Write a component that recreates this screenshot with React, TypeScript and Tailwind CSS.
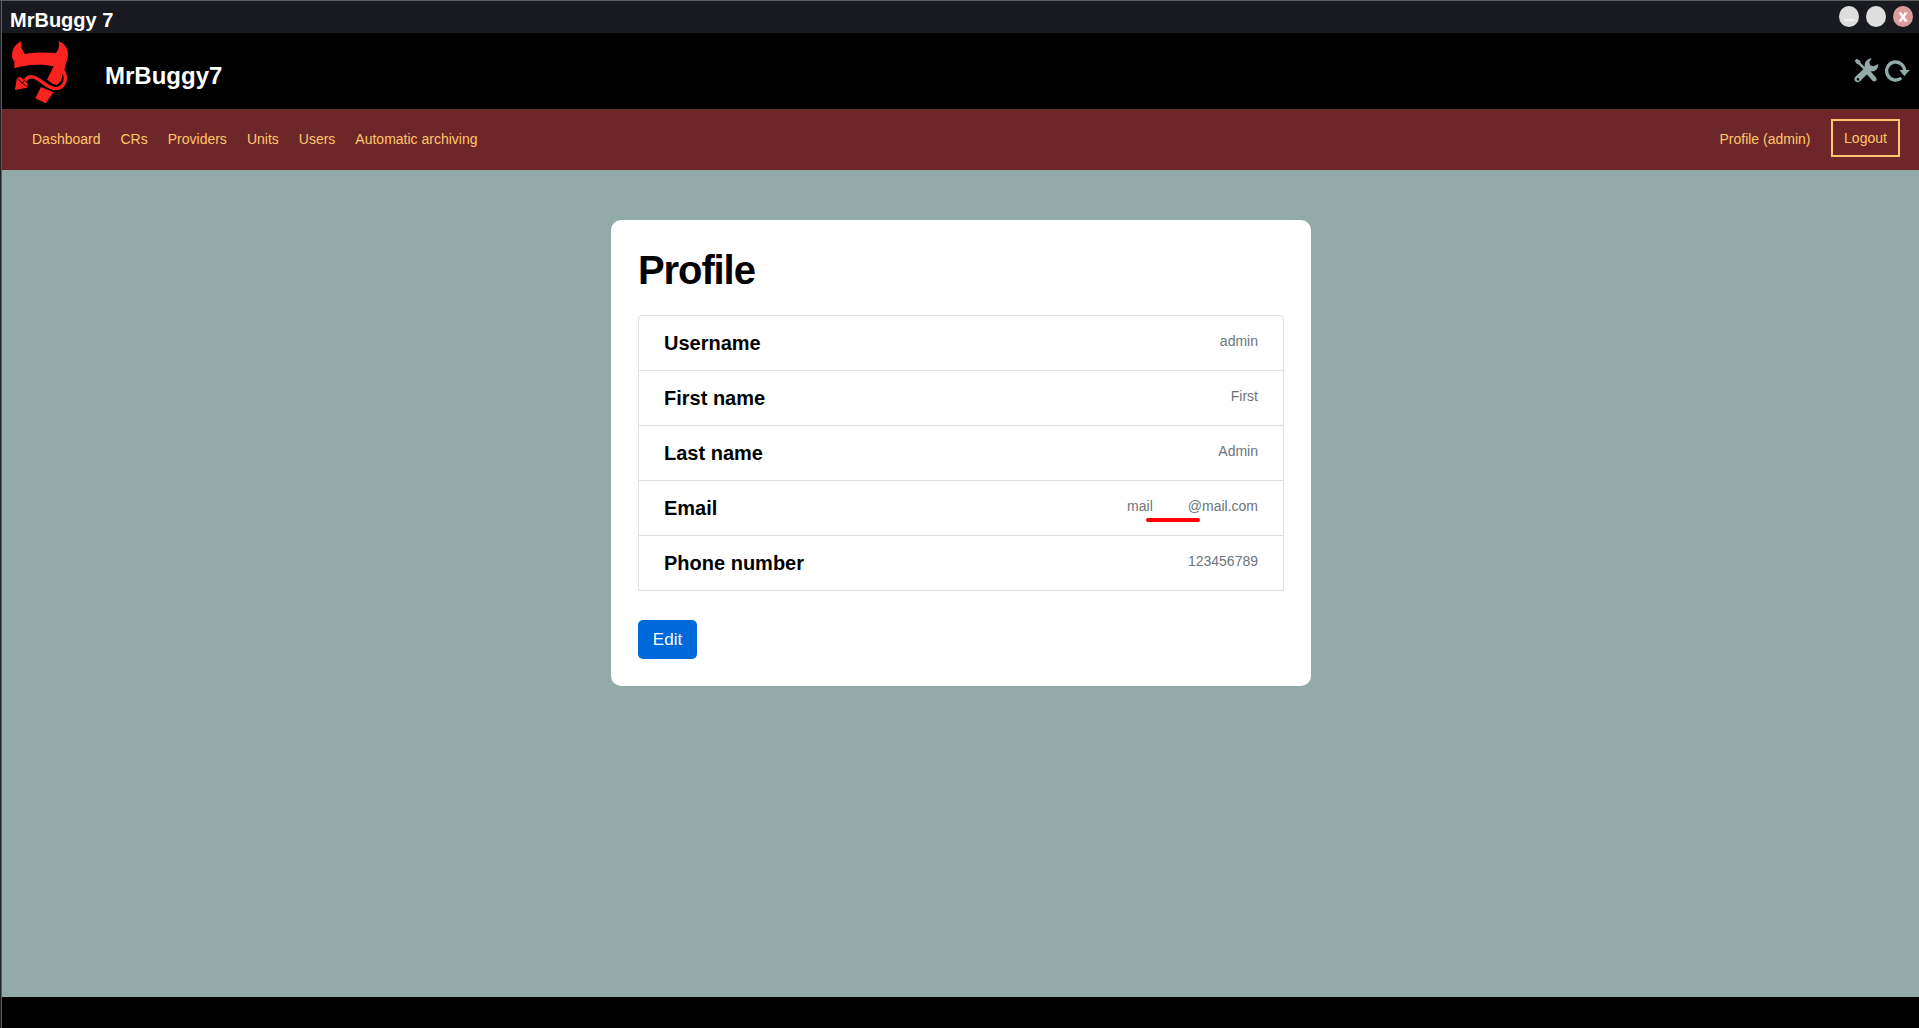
const links = ['Dashboard', 'CRs', 'Providers', 'Units', 'Users', 'Automatic archiving'];

const fields = [
  { label: 'Username', value: 'admin' },
  { label: 'First name', value: 'First' },
  { label: 'Last name', value: 'Admin' },
  { label: 'Email', value: 'mail         @mail.com', marked: true },
  { label: 'Phone number', value: '123456789' },
];

function Logo() {
  return (
    <svg viewBox="30 30 180 192" className="h-16 w-[60px]">
      <path
        fill="#fb2320"
        d="M64 34C46 42 36 58 36 76C36 86 39 91 43 93V115C80 103 125 101 161 109L141 149L158 161L170 165C180 160 186 150 187 136L194 118C196 98 204 92 204 72C204 56 194 40 176 34C179 50 175 62 167 70C136 66 104 67 75 72C67 62 62 50 64 34Z"
      />
      <path fill="#fb2320" d="M123 171L106 205L137 220L161 187Z" />
      <path
        fill="none"
        stroke="#fb2320"
        strokeWidth="10"
        strokeLinecap="round"
        d="M76 150C86 136 100 138 115 148C134 160 148 177 168 176C193 173 202 150 192 126"
      />
      <path fill="#fb2320" d="M51 144L62 141L84 162L80 173L46 180L45 177Z" />
      <path fill="none" stroke="#000" strokeWidth="2.5" d="M53 147L78 168M65 162L75 149" />
    </svg>
  );
}

function ToolsIcon() {
  return (
    <svg viewBox="0 0 75 75" className="size-[25px]" fill="#93aba8">
      <path d="M2 8L8 2L18 8L20 15L41 35L35 41L15 20L9 18Z" />
      <path d="M37 47L47 37L64 56C74 66 63 76 54 67Z" />
      <path
        fillRule="evenodd"
        d="M32 24C31 12 40 2 53 1L46 12L48 22L59 25L73 18C73 33 63 43 48 40L18 70C8 78-5 66 4 56L32 30ZM12 60A4 4 0 1 0 12 68A4 4 0 1 0 12 60Z"
      />
    </svg>
  );
}

function ReloadIcon() {
  return (
    <svg viewBox="0 0 75 66" className="h-[22px] w-[25px]">
      <path d="M49 54A27 27 0 1 1 59 33" fill="none" stroke="#93aba8" strokeWidth="10" />
      <path d="M43 30H74L58 49Z" fill="#93aba8" />
    </svg>
  );
}

export default function App() {
  return (
    <div className="flex h-[1028px] w-full flex-col overflow-hidden border-t border-[#5f6062] bg-black font-['Liberation_Sans',Arial,sans-serif]">
      <div className="flex min-h-0 flex-1 border-l border-[#202126]">
        <div className="flex min-w-0 flex-1 flex-col border-l border-[#5c5c5e]">
          <div className="flex h-8 shrink-0 items-start justify-between bg-[#191a1f] pl-2 pr-[6px]">
            <span className="pt-1 text-xl leading-[30px] font-bold text-white">MrBuggy 7</span>
            <div className="flex gap-[7px] pt-[5px]">
              <span className="flex h-[21px] w-5 items-end justify-center rounded-[50%] bg-[#dedede] pb-[6px]">
                <span className="h-[2px] w-[11px] bg-[#f1f1f1]" />
              </span>
              <span className="h-[21px] w-5 rounded-[50%] bg-[#dedede]" />
              <span className="flex h-[21px] w-5 items-center justify-center rounded-[50%] bg-[#dc9c9d]">
                <svg viewBox="0 0 10 10" className="h-[10px] w-[10px]">
                  <path d="M.5 1H4M6 1H9.5M.5 9H4M6 9H9.5" stroke="#fff" strokeWidth="1" />
                  <path d="M2 1L8 9M8 1L2 9" stroke="#fff" strokeWidth="2.2" />
                </svg>
              </span>
            </div>
          </div>

          <header className="flex h-[76px] shrink-0 items-start bg-black pl-2 pr-[9px]">
            <div className="pt-[7px]">
              <Logo />
            </div>
            <h1 className="ml-[35px] pt-[25px] text-2xl leading-9 font-bold text-white">MrBuggy7</h1>
            <div className="ml-auto flex gap-[6px] pt-[25px]">
              <ToolsIcon />
              <div className="pt-[2px]">
                <ReloadIcon />
              </div>
            </div>
          </header>

          <nav className="flex h-[61px] shrink-0 items-center justify-between bg-[#6e2729] pb-[2px] pl-[30px] pr-[19px] text-sm text-[#ffc66d]">
            <div className="flex gap-5">
              {links.map((link) => (
                <a key={link}>{link}</a>
              ))}
            </div>
            <div className="flex items-center gap-[20.5px]">
              <a>Profile (admin)</a>
              <button className="mb-[2px] h-[38px] w-[69px] border-2 border-[#ffc66d]">Logout</button>
            </div>
          </nav>

          <main className="flex min-h-0 flex-1 items-start bg-[#93aba8] pt-[50px] pl-[609px]">
            <section className="h-[466px] w-[700px] rounded-[10px] bg-white px-[27px] pt-5 text-black">
              <h2 className="text-[40px] leading-[60px] font-bold tracking-[-1.1px]">Profile</h2>
              <dl className="mt-[15px] rounded-t border border-[#dfdfdf]">
                {fields.map((f) => (
                  <div
                    key={f.label}
                    className="flex h-[55px] items-start justify-between border-b border-[#dfdfdf] px-[25px] last:h-[54px] last:border-b-0"
                  >
                    <dt className="pt-3 text-xl leading-[30px] font-bold">{f.label}</dt>
                    <dd className="relative pt-[15px] text-sm leading-[21px] whitespace-pre text-[#6c757d]">
                      {f.value}
                      {f.marked && (
                        <span className="absolute top-[37px] right-[58.5px] h-1 w-[54px] rounded-full bg-[#ff0000]" />
                      )}
                    </dd>
                  </div>
                ))}
              </dl>
              <button className="mt-[29px] h-[39px] w-[59px] rounded-[5px] bg-[#0069d9] text-[17px] text-white">
                Edit
              </button>
            </section>
          </main>

          <footer className="h-[31px] shrink-0 bg-black" />
        </div>
      </div>
    </div>
  );
}
